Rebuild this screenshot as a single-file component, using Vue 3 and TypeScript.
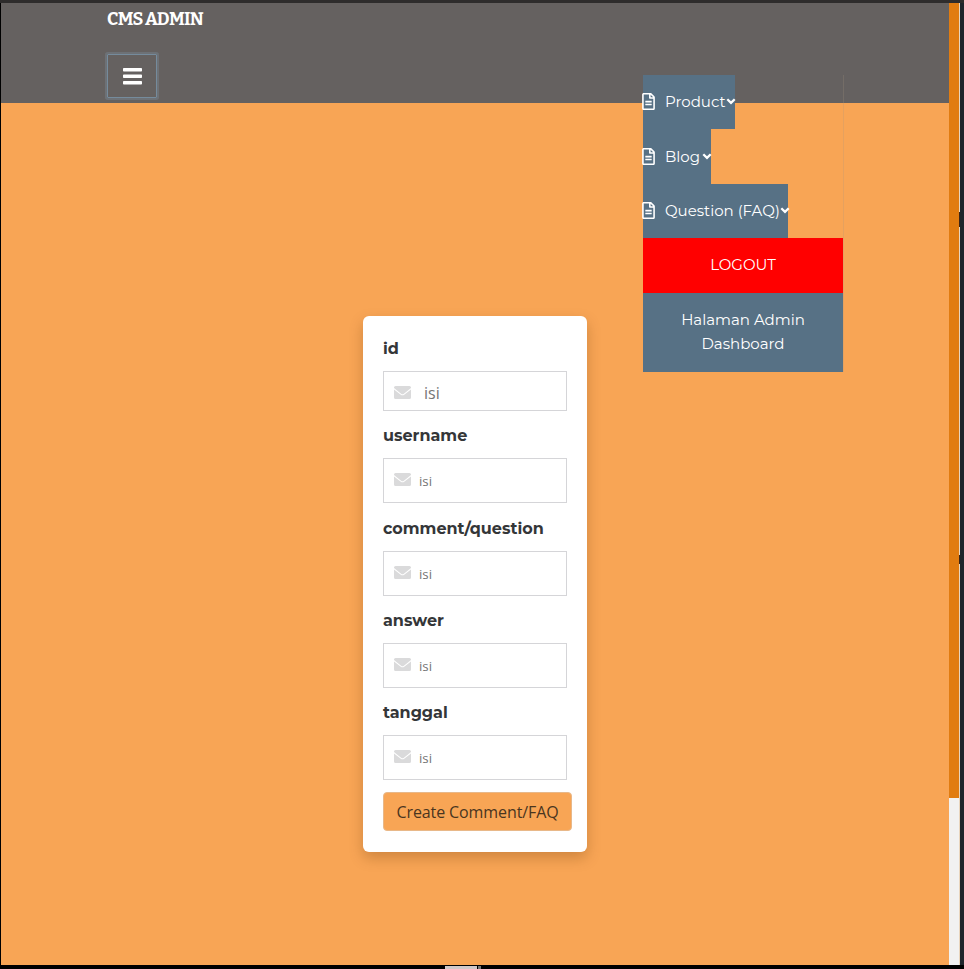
<script setup lang="ts">
interface Field {
  name: string
  compact: boolean
}

interface MenuEntry {
  label: string
  kind: string
}

const fields: Field[] = [
  { name: 'id', compact: true },
  { name: 'username', compact: false },
  { name: 'comment/question', compact: false },
  { name: 'answer', compact: false },
  { name: 'tanggal', compact: false },
]

const groups: MenuEntry[] = [
  { label: 'Product', kind: 'product' },
  { label: 'Blog', kind: 'blog' },
  { label: 'Question (FAQ)', kind: 'faq' },
]
</script>

<template>
  <div class="window">
    <div class="viewport">
      <main class="page">
        <header class="header">
          <div class="brand">CMS ADMIN</div>
          <button class="toggle" type="button" aria-label="Menu">
            <svg width="19" height="17" viewBox="0 0 19 17">
              <path d="M.8 0h17.4q.8 0 .8.8v1.9q0 .8-.8.8H.8q-.8 0-.8-.8V.8Q0 0 .8 0zM.8 6.5h17.4q.8 0 .8.8v1.9q0 .8-.8.8H.8q-.8 0-.8-.8V7.300q0-.8.8-.8zM.8 13h17.400q.8 0 .8.8v1.900q0 .8-.8.8H.8q-.8 0-.8-.8v-1.900q0-.8.8-.8z" fill="#fff" />
            </svg>
          </button>
        </header>

        <nav class="menu">
          <a v-for="g in groups" :key="g.kind" class="group" :class="g.kind">
            <svg class="file" viewBox="0 0 384 512">
              <path d="M288 248v28c0 6.600-5.400 12-12 12H108c-6.600 0-12-5.400-12-12v-28c0-6.600 5.400-12 12-12h168c6.600 0 12 5.400 12 12zm-12 72H108c-6.600 0-12 5.400-12 12v28c0 6.600 5.400 12 12 12h168c6.600 0 12-5.400 12-12v-28c0-6.600-5.400-12-12-12zm108-188.100V464c0 26.500-21.500 48-48 48H48c-26.500 0-48-21.500-48-48V48C0 21.500 21.500 0 48 0h204.100C264.800 0 277 5.100 286 14.100L369.900 98c9 8.900 14.100 21.200 14.100 33.900zm-128-80V128h76.100L256 51.900zM336 464V176H232c-13.300 0-24-10.700-24-24V48H48v416h288z" fill="#fff" />
            </svg>
            <span class="text">{{ g.label }}</span>
            <svg class="chevron" viewBox="0 0 10 7">
              <path d="M1.300 1.300 5 4.900l3.700-3.600" fill="none" stroke="#fff" stroke-width="2.300" />
            </svg>
          </a>
          <a class="wide logout"><span>LOGOUT</span></a>
          <a class="wide dash"><span>Halaman Admin</span><span class="second">Dashboard</span></a>
        </nav>

        <form class="card" @submit.prevent>
          <div v-for="f in fields" :key="f.name" class="field">
            <label :for="f.name"><span :class="'name-' + f.name.slice(0, 2)">{{ f.name }}</span></label>
            <div class="box" :class="{ compact: f.compact }">
              <svg class="mail" viewBox="0 0 17 13">
                <path d="M1.600 0h13.800Q17 0 17 1.600v.5L9.600 7.900q-1.100.8-2.200 0L0 2.100v-.5Q0 0 1.600 0zM0 3.400l6.800 5.300q1.700 1.200 3.400 0L17 3.400v8q0 1.600-1.600 1.600H1.600Q0 13 0 11.400z" fill="#dadadb" />
              </svg>
              <input :id="f.name" type="text" placeholder="isi" />
            </div>
          </div>
          <button class="submit" type="submit"><span>Create Comment/FAQ</span></button>
        </form>
      </main>
      <div class="track"><div class="thumb"></div></div>
      <div class="edge"><i class="mark first"></i><i class="mark next"></i></div>
    </div>
    <div class="bottom"><i class="piece"></i><i class="sliver"></i></div>
  </div>
</template>

<style>
body {
  margin: 0;
  overflow: hidden;
}
</style>

<style scoped>
* {
  box-sizing: border-box;
}
.window {
  width: 964px;
  height: 969px;
  background: #000;
  overflow: hidden;
}
.viewport {
  height: 965px;
  display: flex;
  padding-left: 1px;
  border-top: 3px solid #2e2c2c;
}
.page {
  position: relative;
  width: 948px;
  background: #f8a555;
  font-family: Montserrat, Inter, sans-serif;
}
.header {
  height: 100px;
  padding: 3px 0 0 106px;
  background: #656160;
}
.brand {
  height: 26px;
  font: 700 20px/26px Bitter, "Noto Serif", "DejaVu Serif", serif;
  font-size: 18px;
  letter-spacing: -0.7px;
  color: #fff;
  white-space: nowrap;
}
.toggle {
  display: flex;
  align-items: center;
  justify-content: center;
  width: 50px;
  height: 44px;
  margin-top: 22px;
  padding: 0;
  background: transparent;
  border: 1px solid #758b9c;
  border-radius: 1px;
  box-shadow: 0 0 0 2px #6d7176;
}
.menu {
  position: absolute;
  z-index: 2;
  top: 71.500px;
  left: 642px;
  width: 201px;
  display: flex;
  flex-direction: column;
  align-items: flex-start;
  border-right: 1px solid rgba(170, 150, 130, 0.23);
  font-size: 15px;
  color: #fff;
}
.group {
  display: flex;
  align-items: center;
  height: 54.500px;
  background: #577185;
  white-space: nowrap;
}
.product {
  width: 92px;
}
.blog {
  width: 68px;
}
.faq {
  width: 145px;
}
.file {
  flex: none;
  width: 13px;
  height: 17px;
  margin-left: -1px;
}
.text {
  flex: 1;
  margin-left: 10px;
}
.chevron {
  flex: none;
  width: 10px;
  height: 7px;
  margin-right: -1px;
}
.wide {
  width: 200px;
  display: flex;
  flex-direction: column;
  align-items: center;
  justify-content: center;
  line-height: 24px;
}
.logout {
  height: 54.500px;
  background: #f00;
}
.dash {
  height: 79.500px;
  background: #577185;
}
.card {
  width: 224px;
  height: 536px;
  margin: 213px 0 0 362px;
  padding: 20px;
  border-radius: 6px;
  background: #fff;
  box-shadow: 0 6px 14px rgba(100, 55, 10, 0.28);
}
.field {
  margin-bottom: 12.300px;
}
.field label {
  display: block;
  height: 26px;
  margin-bottom: 9px;
  font-size: 16px;
  font-weight: 700;
  line-height: 26px;
  color: #343638;
  white-space: nowrap;
}
.box {
  display: flex;
  align-items: flex-start;
  width: 184px;
  height: 45px;
  padding: 14px 10px 0;
  border: 1px solid #d5d5d8;
}
.compact {
  height: 40px;
}
.mail {
  flex: none;
  width: 17px;
  height: 13px;
}
.box input {
  width: 120px;
  height: 22px;
  margin: -3px 0 0 8px;
  padding: 0;
  border: 0;
  outline: 0;
  background: transparent;
  font: 13.300px/22px "Segoe UI", "Open Sans", sans-serif;
}
.compact input {
  margin: -4px 0 0 13px;
  font-size: 16px;
}
.box input::placeholder {
  color: #757575;
  opacity: 1;
}
.submit {
  display: flex;
  align-items: center;
  justify-content: center;
  width: 189px;
  height: 39px;
  padding: 0;
  border: 1px solid #e8b889;
  border-radius: 4px;
  background: #f8a555;
  font: 16px/24px "Segoe UI", "Open Sans", sans-serif;
  font-weight: 400;
  letter-spacing: -0.1px;
  color: #4a351f;
  white-space: nowrap;
}
.track {
  width: 10px;
  background: #f1f1f1;
}
.thumb {
  height: 795px;
  background: #e17c10;
}
.edge {
  width: 5px;
  background: #1f252c;
  border-left: 1px solid #e8d5bd;
}
.mark {
  display: block;
  width: 1px;
  margin-left: -1px;
  background: #3b2415;
}
.first {
  height: 15px;
  margin-top: 209px;
}
.next {
  height: 9px;
  margin-top: 328px;
}
.bottom {
  display: flex;
  gap: 1px;
  height: 4px;
  padding: 1px 0 0 445px;
}
.piece {
  width: 32px;
  background: #d0c9c9;
}
.sliver {
  width: 3px;
  background: #777;
}
</style>
